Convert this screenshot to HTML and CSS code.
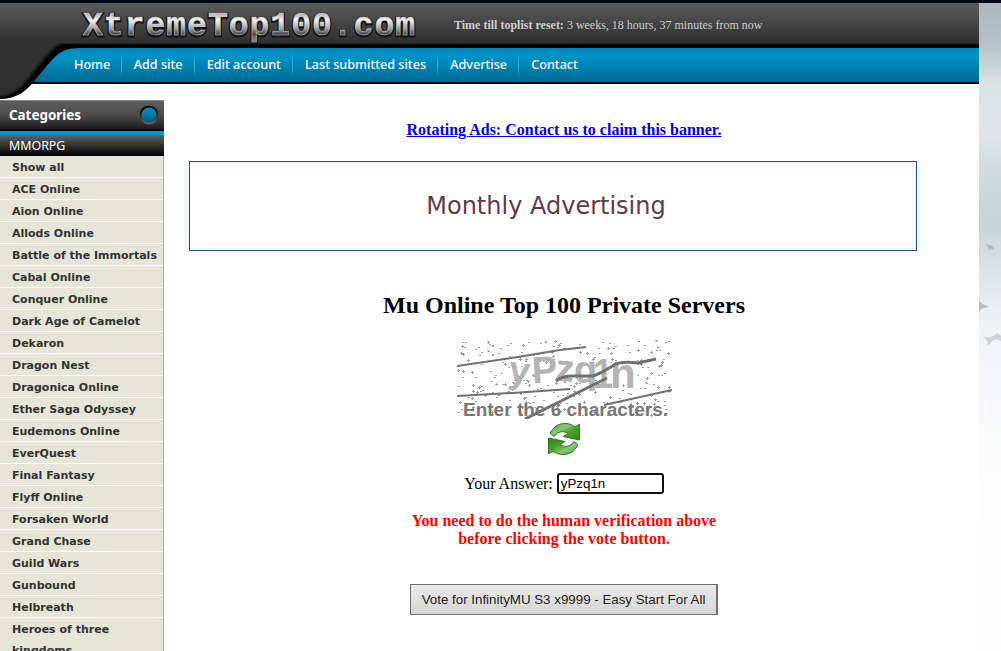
FILE: index.html
```html
<!DOCTYPE html>
<html lang="en">
<head>
  <meta charset="UTF-8">
  <meta name="viewport" content="width=device-width, initial-scale=1.0">
  <title>XtremeTop100 - Mu Online Top 100 Private Servers</title>
  <link rel="stylesheet" href="styles.css">
</head>
<body>
  <div class="sky">
    <svg width="22" height="140" viewBox="0 0 22 140" fill="#a9b2b5">
      <path d="M6 24l4 1 4 1 1 4-3-1-2 2-1-4z" opacity=".8"/>
      <path d="M0 81l4 3 6 3-5 1-3 1-2 3z" opacity=".8"/>
      <path d="M4 116l5 2 5-2 4-3 4 3v5l-5-2-4 2-4 5-1-5z" opacity=".5"/>
    </svg>
  </div>

  <div class="page">
    <header class="header">
      <svg class="logo" width="340" height="45" viewBox="0 0 340 45">
        <defs>
          <linearGradient id="metal" gradientUnits="userSpaceOnUse" x1="0" y1="8" x2="0" y2="34">
            <stop offset="0" stop-color="#999"/>
            <stop offset=".35" stop-color="#f4f4f4"/>
            <stop offset=".65" stop-color="#aaa"/>
            <stop offset=".9" stop-color="#444"/>
            <stop offset="1" stop-color="#777"/>
          </linearGradient>
        </defs>
        <text class="logo-shadow" x="3" y="33" textLength="332">XtremeTop100.com</text>
        <text class="logo-text" x="3" y="32" textLength="332">XtremeTop100.com</text>
      </svg>
      <p class="reset"><b>Time till toplist reset:</b> 3 weeks, 18 hours, 37 minutes from now</p>
    </header>

    <nav class="nav">
      <a href="#">Home</a>
      <a href="#">Add site</a>
      <a href="#">Edit account</a>
      <a href="#">Last submitted sites</a>
      <a href="#">Advertise</a>
      <a href="#">Contact</a>
      <svg class="swoosh" width="80" height="60" viewBox="0 0 80 60">
        <path d="M0 4H80V8C66 8 60 11 50 22L36 39C26 52 16 59 0 59Z" fill="#000"/>
        <path d="M0 3H66C59 4 54 9 47 17L33 34C23 48 13 57 0 57Z" fill="#1c1c1c"/>
        <path d="M0 2H64C57 3 53 7 45 16L31 33C21 47 12 55 0 55Z" fill="#303030"/>
      </svg>
    </nav>

    <div class="columns">
      <aside class="sidebar">
        <h2 class="side-title">Categories
          <svg width="20" height="20" viewBox="0 0 20 20">
            <defs>
              <linearGradient id="ring" x1="0" y1="0" x2="0" y2="1">
                <stop offset=".2" stop-color="#080808"/>
                <stop offset="1" stop-color="#666"/>
              </linearGradient>
              <linearGradient id="knob" x1="0" y1="0" x2="0" y2="1">
                <stop offset="0" stop-color="#0095c8"/>
                <stop offset="1" stop-color="#00567a"/>
              </linearGradient>
            </defs>
            <circle cx="10" cy="10" r="9.5" fill="url(#ring)"/>
            <circle cx="10" cy="10" r="7.5" fill="url(#knob)"/>
          </svg>
        </h2>
        <h3 class="side-group">MMORPG</h3>
        <ul class="side-list">
          <li>Show all</li>
          <li>ACE Online</li>
          <li>Aion Online</li>
          <li>Allods Online</li>
          <li>Battle of the Immortals</li>
          <li>Cabal Online</li>
          <li>Conquer Online</li>
          <li>Dark Age of Camelot</li>
          <li>Dekaron</li>
          <li>Dragon Nest</li>
          <li>Dragonica Online</li>
          <li>Ether Saga Odyssey</li>
          <li>Eudemons Online</li>
          <li>EverQuest</li>
          <li>Final Fantasy</li>
          <li>Flyff Online</li>
          <li>Forsaken World</li>
          <li>Grand Chase</li>
          <li>Guild Wars</li>
          <li>Gunbound</li>
          <li>Helbreath</li>
          <li>Heroes of three kingdoms</li>
        </ul>
      </aside>

      <main class="main">
        <a class="rotating" href="#">Rotating Ads: Contact us to claim this banner.</a>
        <div class="banner">Monthly Advertising</div>
        <h1>Mu Online Top 100 Private Servers</h1>

        <svg class="captcha" width="215" height="79" viewBox="0 0 215 79">
          <g id="noise"></g>
          <g class="code">
            <text x="51" y="43" transform="rotate(8 62 36)">y</text>
            <text x="75" y="43" transform="rotate(-3 84 34)">P</text>
            <text x="98" y="41" transform="rotate(5 106 36)">z</text>
            <text x="117" y="43">q</text>
            <text x="136" y="48" font-size="42" textLength="20" lengthAdjust="spacingAndGlyphs">1</text>
            <text x="153" y="48" font-size="42">n</text>
          </g>
          <text class="hint" x="6" y="76" textLength="205" lengthAdjust="spacingAndGlyphs">Enter the 6 characters.</text>
          <g fill="none" stroke="#707070" stroke-width="2">
            <path d="M0 26L61 17L103 10L129 7"/>
            <path d="M0 56L55 53L113 49"/>
            <path d="M147 65L215 50"/>
            <path d="M68 79L90 68L150 38" stroke-width="3"/>
            <path d="M99 41Q105 36 115 36H136Q145 33 157 25Q164 21 181 23L199 19" stroke-width="3"/>
          </g>
        </svg>

        <svg class="refresh" width="34" height="34" viewBox="0 0 34 34">
          <defs>
            <linearGradient id="green" x1="0" y1="0" x2="1" y2="1">
              <stop offset="0" stop-color="#3f9426"/>
              <stop offset=".35" stop-color="#8ac878"/>
              <stop offset=".6" stop-color="#4c9f33"/>
              <stop offset="1" stop-color="#2f8418"/>
            </linearGradient>
          </defs>
          <g fill="url(#green)" stroke="#2c7a1a" stroke-linejoin="round">
            <path id="arrow" d="M3 11C7 4 12 1.500 18 1.500C22 1.500 26 3 28 5L32.500 2V18L16 14.500L21 11.500C16 8 10 10 7 14.500Z"/>
            <use href="#arrow" transform="rotate(180 17 17)"/>
          </g>
        </svg>

        <div class="answer">
          <label for="answer">Your Answer:</label>
          <input id="answer" type="text" value="yPzq1n">
        </div>
        <p class="warning">You need to do the human verification above<br>before clicking the vote button.</p>
        <button class="vote">Vote for InfinityMU S3 x9999 - Easy Start For All</button>
      </main>
    </div>
  </div>

  <script>
    // speckles behind the captcha letters
    const noise = document.getElementById("noise");
    let seed = 41;
    function rand(max) {
      seed = (seed * 16807) % 2147483647;
      return Math.floor(seed / 2147483647 * max);
    }
    let d = "";
    for (let i = 0; i < 290; i++) {
      const x = rand(212);
      const y = rand(77) + 0.5;
      d += i % 3 ? `M${x} ${y}h2` : `M${x} ${y}h3m-1.5-1.5v3`;
    }
    noise.innerHTML = `<path d="${d}" stroke="#a0a0a0" fill="none"/>`;
  </script>
</body>
</html>
```

FILE: styles.css
```css
* {
  box-sizing: border-box;
}
body {
  margin: 0;
  height: 651px;
  overflow: hidden;
  border-top: 3px solid #030615;
  font-family: "Liberation Serif", serif;
  font-size: 16px;
  color: #000;
  display: flex;
  flex-direction: row-reverse;
}
.sky {
  width: 22px;
  padding-top: 217px;
  background: linear-gradient(#aab8be, #b4c3c6 40px, #c3d0d0 58px, #dbe2e5 80px, #dfe5e8 130px, #ced9d9 180px, #c8d5d5 225px, #dfe6e8 275px, #eff2f4 320px, #f8f9fa 400px, #fefefe 520px);
}
.page {
  width: 979px;
  background: #fff;
}
.header {
  height: 45px;
  display: flex;
  align-items: flex-start;
  background: linear-gradient(#5b5b5b, #2f2f2f 40px, #111 41px, #000 43px);
}
.logo {
  margin-left: 80px;
}
.logo text {
  font-family: "Liberation Mono", monospace;
  font-size: 33px;
  font-weight: bold;
}
.logo-text {
  fill: url(#metal);
  stroke: #ccc;
  stroke-width: .5px;
}
.logo-shadow {
  fill: #15151c;
  stroke: #15151c;
  stroke-width: 3px;
}
.reset {
  margin: 15px 0 0 34px;
  font-size: 12px;
  line-height: 14px;
  color: #ccc;
}
.nav {
  position: relative;
  height: 36px;
  padding-left: 62px;
  display: flex;
  background: linear-gradient(#0087bb, #0092c8 8px, #006a92 34px);
  border-bottom: 2px solid #000;
}
.nav a {
  position: relative;
  z-index: 1;
  padding: 0 11.2px 0 12px;
  font: 500 12.6px/34px "Noto Sans", sans-serif;
  color: #fff;
  text-decoration: none;
}
.nav a:first-child {
  padding-right: 10.5px;
}
.nav a + a {
  border-left: 1px solid;
  border-image: linear-gradient(transparent 15%, #4ab3d5 50%, transparent 85%) 1;
}
.swoosh {
  position: absolute;
  left: 0;
  top: -8px;
}
.columns {
  display: flex;
  align-items: flex-start;
}
.sidebar {
  width: 164px;
  margin-top: 16px;
  font-family: "DejaVu Sans", Verdana, sans-serif;
}
.side-title {
  margin: 0;
  height: 31px;
  padding: 0 5px 3px 9px;
  display: flex;
  justify-content: space-between;
  align-items: center;
  font: bold 13.4px/20px "Noto Sans", sans-serif;
  color: #fff;
  background: linear-gradient(#606060, #494949 50%, #1b1b1b 28px, #000 29px);
  border-top: 1px solid #888;
}
.side-group {
  margin: 0;
  height: 25px;
  padding-left: 9px;
  font: 12.4px/21px "Noto Sans", sans-serif;
  color: #fff;
  background: linear-gradient(#646464, #000);
  border-top: 4px solid #0092c8;
}
.side-list {
  margin: 0;
  padding: 0;
  list-style: none;
  background: #e5e5d8;
  border-right: 1px solid #aaa;
}
.side-list li {
  padding: 1px 5px 0 12px;
  font-size: 11px;
  font-weight: bold;
  line-height: 21px;
  color: #333;
  box-shadow: inset 0 -1px #fff;
}
.main {
  width: 800px;
  padding-top: 37px;
  display: flex;
  flex-direction: column;
  align-items: center;
}
.rotating {
  font-weight: bold;
  line-height: 18px;
  color: #00e;
}
.banner {
  width: 728px;
  height: 90px;
  margin: 22px 22px 0 0;
  padding-right: 14px;
  border: 1px solid #2149a5;
  font: 24px/88px "DejaVu Sans", Verdana, sans-serif;
  text-align: center;
  color: #603b4b;
}
h1 {
  margin: 40px 0 0;
  font-size: 24px;
  line-height: 28px;
}
.captcha {
  margin-top: 21px;
}
.code {
  font: bold 38px "Liberation Sans", sans-serif;
  fill: #b4b4b4;
}
.hint {
  font: bold 18px "Liberation Sans", sans-serif;
  fill: #777;
}
.refresh {
  margin-top: 3px;
}
.answer {
  display: flex;
  gap: 4px;
  margin-top: 17px;
  line-height: 22px;
}
.answer input {
  width: 107px;
  height: 21px;
  padding: 0 2px;
  border: 2px solid #101010;
  border-radius: 3px;
  font: 13.33px "Liberation Sans", sans-serif;
}
.warning {
  margin: 17px 0 0;
  font-weight: bold;
  line-height: 18px;
  text-align: center;
  color: #f00;
}
.vote {
  width: 308px;
  height: 31px;
  margin-top: 36px;
  padding: 0;
  border: 1px solid #707070;
  border-right-width: 2px;
  font: 13.33px "Liberation Sans", sans-serif;
  color: #222;
  background: linear-gradient(#ebebeb, #d5d5d5);
}
```
